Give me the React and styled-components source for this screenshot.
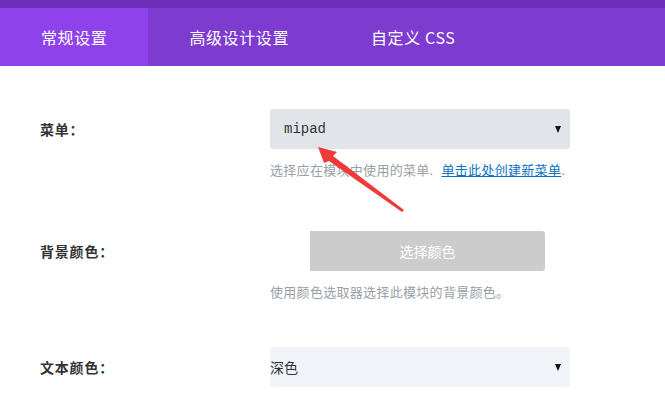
import React from "react";
import styled, { createGlobalStyle } from "styled-components";

const GlobalStyle = createGlobalStyle`
  html, body {
    margin: 0;
    padding: 0;
    background: #fff;
  }
  body {
    font-family: "Noto Sans CJK SC", "Noto Sans", sans-serif;
  }
`;

const Page = styled.div`
  position: relative;
  width: 665px;
  height: 397px;
  overflow: hidden;
  background: #fff;
`;

const TopStrip = styled.div`
  height: 8px;
  background: #6c2eb8;
`;

const TabBar = styled.div`
  display: flex;
  height: 58px;
  background: #7d3bd0;
`;

const Tab = styled.div`
  display: flex;
  align-items: center;
  padding: 0 41px;
  background: ${(p) => (p.$active ? "#8f42eb" : "transparent")};
  color: #fff;
  font-size: 16px;
  letter-spacing: 0.6px;
  white-space: nowrap;
`;

const Content = styled.div`
  padding: 43px 0 0 40px;
`;

const Row = styled.div`
  display: grid;
  grid-template-columns: 230px 300px;
  margin-bottom: ${(p) => p.$gap || 0}px;
`;

const Label = styled.div`
  height: 40px;
  display: flex;
  align-items: center;
  font-size: 14px;
  font-weight: 700;
  letter-spacing: 0.8px;
  color: #333;
`;

const Field = styled.div`
  display: flex;
  flex-direction: column;
`;

const SelectBox = styled.div`
  height: 40px;
  display: flex;
  align-items: center;
  justify-content: space-between;
  padding: 0 9px 0 ${(p) => p.$indent}px;
  border-radius: 3px;
  background: ${(p) => p.$bg};
  color: #333;
  font-size: 14px;
  font-family: ${(p) =>
    p.$mono
      ? '"Liberation Mono", "DejaVu Sans Mono", monospace'
      : '"Noto Sans CJK SC", sans-serif'};
`;

const Caret = styled.span`
  width: 0;
  height: 0;
  border-left: 3.5px solid transparent;
  border-right: 3.5px solid transparent;
  border-top: 7px solid #111;
`;

const Help = styled.div`
  margin-top: 12px;
  font-size: 13px;
  line-height: 18px;
  color: #9aa0a7;
  white-space: nowrap;
  letter-spacing: 0.3px;
`;

const HelpLink = styled.a`
  margin-left: 8px;
  color: #0c71c3;
  text-decoration: underline;
`;

const ColorPicker = styled.div`
  display: flex;
  height: 40px;
  width: 275px;
`;

const Swatch = styled.div`
  width: 40px;
  background: #fff;
  border-radius: 3px 0 0 3px;
`;

const PickButton = styled.div`
  flex: 1;
  display: flex;
  align-items: center;
  justify-content: center;
  background: #cccccc;
  border-radius: 0 3px 3px 0;
  color: #fff;
  font-size: 14px;
`;

const Pointer = styled.svg`
  position: absolute;
  left: 310px;
  top: 140px;
`;

export default function App() {
  return (
    <Page>
      <GlobalStyle />
      <TopStrip />
      <TabBar>
        <Tab $active>常规设置</Tab>
        <Tab>高级设计设置</Tab>
        <Tab>自定义 CSS</Tab>
      </TabBar>
      <Content>
        <Row $gap={52}>
          <Label>菜单：</Label>
          <Field>
            <SelectBox $bg="#e1e5ea" $indent={14} $mono>
              mipad
              <Caret />
            </SelectBox>
            <Help>
              选择应在模块中使用的菜单.
              <HelpLink>单击此处创建新菜单</HelpLink>.
            </Help>
          </Field>
        </Row>
        <Row $gap={46}>
          <Label>背景颜色：</Label>
          <Field>
            <ColorPicker>
              <Swatch />
              <PickButton>选择颜色</PickButton>
            </ColorPicker>
            <Help>使用颜色选取器选择此模块的背景颜色。</Help>
          </Field>
        </Row>
        <Row>
          <Label>文本颜色：</Label>
          <Field>
            <SelectBox $bg="#f0f3f8" $indent={0}>
              深色
              <Caret />
            </SelectBox>
          </Field>
        </Row>
      </Content>
      <Pointer width="100" height="75" viewBox="0 0 100 75">
        <polygon points="8,7 27,12 23,16 94,70 92,72 19,21 14,23" fill="#f03a3a" />
      </Pointer>
    </Page>
  );
}
